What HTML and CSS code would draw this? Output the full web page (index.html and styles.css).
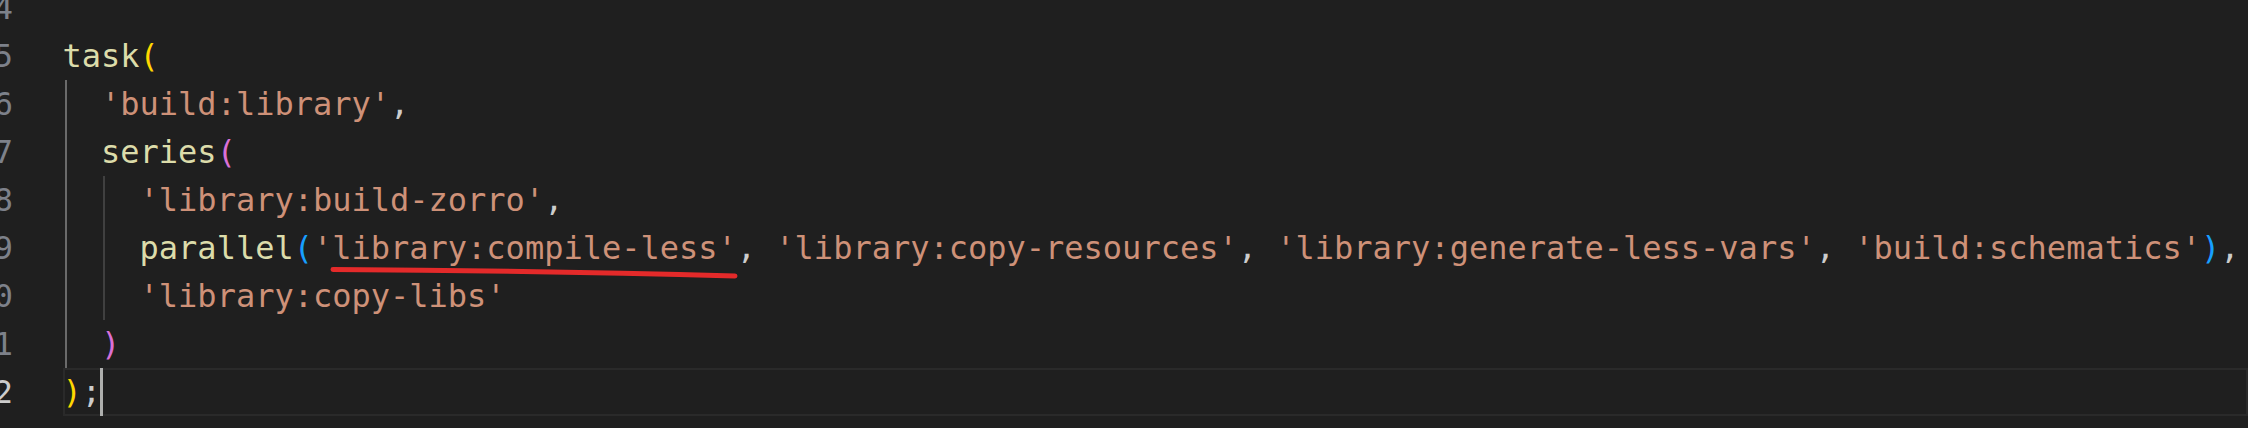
FILE: index.html
```html
<!DOCTYPE html>
<html lang="en">
<head>
<meta charset="utf-8">
<title>Editor</title>
<link rel="stylesheet" href="styles.css">
</head>
<body>
<div class="editor">
  <div class="gutter">
    <div class="ln">4</div>
    <div class="ln">5</div>
    <div class="ln">6</div>
    <div class="ln">7</div>
    <div class="ln">8</div>
    <div class="ln">9</div>
    <div class="ln">10</div>
    <div class="ln">11</div>
    <div class="ln ln-current">12</div>
  </div>
  <div class="code">
    <div class="line"></div>
    <div class="line"><span class="fn">task</span><span class="b1">(</span></div>
    <div class="line"><span class="ig ig-active"></span><span class="str">'build:library'</span><span class="p">,</span></div>
    <div class="line"><span class="ig ig-active"></span><span class="fn">series</span><span class="b2">(</span></div>
    <div class="line"><span class="ig ig-active"></span><span class="ig"></span><span class="str">'library:build-zorro'</span><span class="p">,</span></div>
    <div class="line"><span class="ig ig-active"></span><span class="ig"></span><span class="fn">parallel</span><span class="b3">(</span><span class="str">'library:compile-less'</span><span class="p">, </span><span class="str">'library:copy-resources'</span><span class="p">, </span><span class="str">'library:generate-less-vars'</span><span class="p">, </span><span class="str">'build:schematics'</span><span class="b3">)</span><span class="p">,</span></div>
    <div class="line"><span class="ig ig-active"></span><span class="ig"></span><span class="str">'library:copy-libs'</span></div>
    <div class="line"><span class="ig ig-active"></span><span class="b2">)</span></div>
    <div class="line line-current"><span class="b1">)</span><span class="p">;</span><span class="cursor"></span></div>
  </div>
</div>
<svg class="annot" width="2248" height="428" viewBox="0 0 2248 428" xmlns="http://www.w3.org/2000/svg">
  <path d="M333 269.5 Q 540 270.5 735 276" fill="none" stroke="#e42a2a" stroke-width="5" stroke-linecap="round"/>
</svg>
</body>
</html>
```

FILE: styles.css
```css
html, body {
  margin: 0;
  padding: 0;
  background: #1f1f1f;
  overflow: hidden;
}

body {
  width: 2248px;
  height: 428px;
  position: relative;
  font-family: "DejaVu Sans Mono", "Liberation Mono", monospace;
  font-size: 32px;
  line-height: 48px;
}

.editor {
  display: flex;
  gap: 49.5px;
  margin-top: -16px;
}

.gutter {
  width: 44px;
  margin-left: -31px;
  flex: none;
  text-align: right;
  color: #7d818a;
  overflow: hidden;
}

.ln {
  height: 48px;
  white-space: nowrap;
}

.ln-current {
  color: #cccccc;
}

.code {
  flex: 1;
  min-width: 0;
}

.line {
  height: 48px;
  white-space: pre;
}

.line-current {
  box-shadow: inset 0 0 0 2px #2a2a2a;
}

.ig {
  display: inline-block;
  width: 2ch;
  height: 48px;
  vertical-align: top;
  background: linear-gradient(#404040, #404040) 2px 0 / 2px 100% no-repeat;
}

.ig-active {
  background: linear-gradient(#6a6a6a, #6a6a6a) 2px 0 / 2px 100% no-repeat;
}

.fn { color: #dcdcaa; }
.str { color: #ce9178; }
.p { color: #cccccc; }
.b1 { color: #ffd700; }
.b2 { color: #da70d6; }
.b3 { color: #179fff; }

.cursor {
  display: inline-block;
  width: 3px;
  height: 48px;
  margin-left: -1px;
  margin-right: -2px;
  vertical-align: top;
  background: #aeafad;
}

.annot {
  position: absolute;
  left: 0;
  top: 0;
  pointer-events: none;
}
```
